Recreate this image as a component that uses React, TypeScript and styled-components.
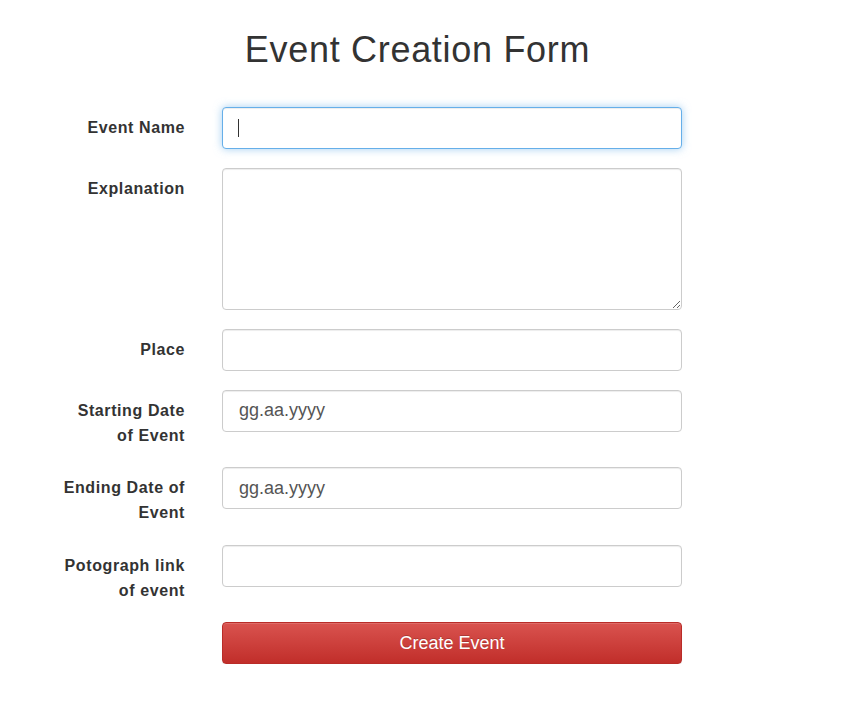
import React from "react";
import styled, { createGlobalStyle } from "styled-components";

const Global = createGlobalStyle`
  html, body { margin: 0; padding: 0; background: #fff; }
  body { font-family: "Liberation Sans", Arial, sans-serif; color: #333; }
  * { box-sizing: border-box; }
`;

const Page = styled.div`
  padding-top: 30px;
  width: 849px;
`;

const Title = styled.h1`
  margin: 0 0 37.4px 0;
  padding-right: 14px;
  text-align: center;
  font-size: 36px;
  line-height: 39.6px;
  font-weight: 400;
  letter-spacing: 0.7px;
  color: #333;
`;

const Form = styled.form`
  display: flex;
  flex-direction: column;
  gap: 19px;
`;

const Row = styled.div`
  display: grid;
  grid-template-columns: 185px 460px;
  column-gap: 37px;
  align-items: start;
`;

const Label = styled.label`
  display: block;
  text-align: right;
  padding-top: 9px;
  padding-left: 57px;
  font-size: 16px;
  line-height: 24.75px;
  font-weight: 700;
  letter-spacing: 0.6px;
  color: #333;
`;

const Field = styled.div`
  position: relative;
`;

const Input = styled.input<{ $focused?: boolean }>`
  display: block;
  width: 460px;
  height: 42px;
  padding: 10px 16px;
  font-family: "Liberation Sans", Arial, sans-serif;
  font-size: 18px;
  color: #555;
  background: #fff;
  border: 1px solid ${(p) => (p.$focused ? "#66afe9" : "#ccc")};
  border-radius: 4px;
  outline: none;
  box-shadow: ${(p) =>
    p.$focused
      ? "inset 0 1px 1px rgba(0,0,0,.075), 0 0 8px rgba(102,175,233,.6)"
      : "inset 0 1px 1px rgba(0,0,0,.075)"};
  &::placeholder { color: #555; opacity: 1; }
`;

const TextArea = styled.textarea`
  display: block;
  width: 460px;
  height: 142px;
  padding: 10px 16px;
  font-family: "Liberation Sans", Arial, sans-serif;
  font-size: 18px;
  color: #555;
  border: 1px solid #ccc;
  border-radius: 4px;
  outline: none;
  box-shadow: inset 0 1px 1px rgba(0,0,0,.075);
  resize: vertical;
`;

const Caret = styled.span`
  position: absolute;
  left: 16px;
  top: 12px;
  width: 1px;
  height: 18px;
  background: #333;
`;

const Button = styled.button`
  display: block;
  width: 460px;
  height: 42px;
  padding: 0;
  font-family: "Liberation Sans", Arial, sans-serif;
  font-size: 18px;
  color: #fff;
  border: 1px solid #b92c28;
  border-radius: 4px;
  background-image: linear-gradient(to bottom, #d9534f 0, #c12e2a 100%);
  box-shadow: inset 0 1px 0 rgba(255,255,255,.15), 0 1px 1px rgba(0,0,0,.075);
  text-shadow: 0 -1px 0 rgba(0,0,0,.2);
  cursor: pointer;
`;

const Spacer = styled.div``;

export default function App() {
  return (
    <Page>
      <Global />
      <Title>Event Creation Form</Title>
      <Form onSubmit={(e) => e.preventDefault()}>
        <Row>
          <Label>Event Name</Label>
          <Field>
            <Input $focused type="text" />
            <Caret />
          </Field>
        </Row>
        <Row>
          <Label>Explanation</Label>
          <Field>
            <TextArea />
          </Field>
        </Row>
        <Row>
          <Label>Place</Label>
          <Field>
            <Input type="text" />
          </Field>
        </Row>
        <Row>
          <Label>Starting Date of Event</Label>
          <Field>
            <Input type="text" placeholder="gg.aa.yyyy" />
          </Field>
        </Row>
        <Row>
          <Label>Ending Date of Event</Label>
          <Field>
            <Input type="text" placeholder="gg.aa.yyyy" />
          </Field>
        </Row>
        <Row>
          <Label>Potograph link of event</Label>
          <Field>
            <Input type="text" />
          </Field>
        </Row>
        <Row>
          <Spacer />
          <Button type="submit">Create Event</Button>
        </Row>
      </Form>
    </Page>
  );
}
